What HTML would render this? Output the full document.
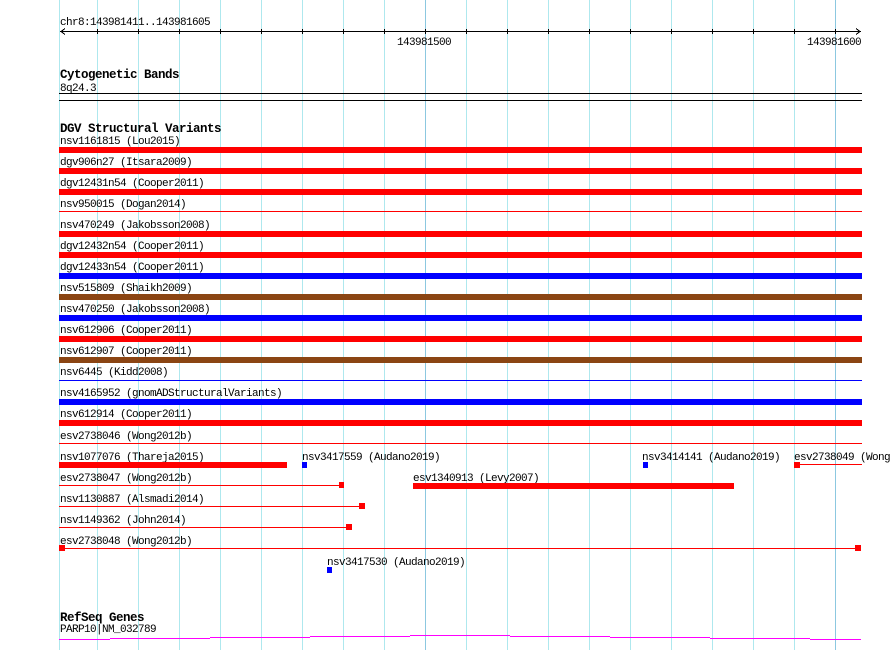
<!DOCTYPE html>
<html><head><meta charset="utf-8"><style>
html,body{margin:0;padding:0;background:#fff;width:890px;height:650px;overflow:hidden}
svg{display:block}
text{font-family:"Liberation Mono",monospace;font-size:11px;letter-spacing:-0.6px;fill:#000}
.b{font-weight:bold;font-size:12.5px;letter-spacing:-0.5px}
</style></head><body>
<svg width="890" height="650" viewBox="0 0 890 650" xmlns="http://www.w3.org/2000/svg" shape-rendering="crispEdges">
<g stroke="#aee8ee" stroke-width="1">
<line x1="59.5" y1="0" x2="59.5" y2="650"/>
<line x1="97.5" y1="0" x2="97.5" y2="650"/>
<line x1="138.5" y1="0" x2="138.5" y2="650"/>
<line x1="179.5" y1="0" x2="179.5" y2="650"/>
<line x1="220.5" y1="0" x2="220.5" y2="650"/>
<line x1="261.5" y1="0" x2="261.5" y2="650"/>
<line x1="302.5" y1="0" x2="302.5" y2="650"/>
<line x1="343.5" y1="0" x2="343.5" y2="650"/>
<line x1="384.5" y1="0" x2="384.5" y2="650"/>
<line x1="466.5" y1="0" x2="466.5" y2="650"/>
<line x1="507.5" y1="0" x2="507.5" y2="650"/>
<line x1="548.5" y1="0" x2="548.5" y2="650"/>
<line x1="589.5" y1="0" x2="589.5" y2="650"/>
<line x1="630.5" y1="0" x2="630.5" y2="650"/>
<line x1="671.5" y1="0" x2="671.5" y2="650"/>
<line x1="712.5" y1="0" x2="712.5" y2="650"/>
<line x1="753.5" y1="0" x2="753.5" y2="650"/>
<line x1="794.5" y1="0" x2="794.5" y2="650"/>
</g>
<g stroke="#8cc8e0"><line x1="425.5" y1="0" x2="425.5" y2="650"/><line x1="835.5" y1="0" x2="835.5" y2="650"/></g>

<text x="60" y="25">chr8:143981411..143981605</text>
<g stroke="#000" stroke-width="1" fill="none">
<line x1="60" y1="31.5" x2="861" y2="31.5"/>
<polyline points="65,28.5 61,31.5 65,34.5"/>
<polyline points="856,28.5 860,31.5 856,34.5"/>
<path d="M97.5 29v5M138.5 29v5M179.5 29v5M220.5 29v5M261.5 29v5M302.5 29v5M343.5 29v5M384.5 29v5M425.5 29v5M466.5 29v5M507.5 29v5M548.5 29v5M589.5 29v5M630.5 29v5M671.5 29v5M712.5 29v5M753.5 29v5M794.5 29v5M835.5 29v5"/>
</g>
<text x="397" y="45">143981500</text>
<text x="807" y="45">143981600</text>

<text class="b" x="60" y="78">Cytogenetic Bands</text>
<text x="60" y="91">8q24.3</text>
<rect x="59" y="93" width="803" height="1" fill="#000"/>
<rect x="59" y="100" width="803" height="1" fill="#000"/>

<text class="b" x="60" y="132">DGV Structural Variants</text>
<text x="60" y="144">nsv1161815 (Lou2015)</text>
<rect x="59" y="147" width="803" height="6" fill="#f00"/>
<text x="60" y="165">dgv906n27 (Itsara2009)</text>
<rect x="59" y="168" width="803" height="6" fill="#f00"/>
<text x="60" y="186">dgv12431n54 (Cooper2011)</text>
<rect x="59" y="189" width="803" height="6" fill="#f00"/>
<text x="60" y="207">nsv950015 (Dogan2014)</text>
<rect x="59" y="211" width="803" height="1" fill="#f00"/>
<text x="60" y="228">nsv470249 (Jakobsson2008)</text>
<rect x="59" y="231" width="803" height="6" fill="#f00"/>
<text x="60" y="249">dgv12432n54 (Cooper2011)</text>
<rect x="59" y="252" width="803" height="6" fill="#f00"/>
<text x="60" y="270">dgv12433n54 (Cooper2011)</text>
<rect x="59" y="273" width="803" height="6" fill="#00f"/>
<text x="60" y="291">nsv515809 (Shaikh2009)</text>
<rect x="59" y="294" width="803" height="6" fill="#8b4513"/>
<text x="60" y="312">nsv470250 (Jakobsson2008)</text>
<rect x="59" y="315" width="803" height="6" fill="#00f"/>
<text x="60" y="333">nsv612906 (Cooper2011)</text>
<rect x="59" y="336" width="803" height="6" fill="#f00"/>
<text x="60" y="354">nsv612907 (Cooper2011)</text>
<rect x="59" y="357" width="803" height="6" fill="#8b4513"/>
<text x="60" y="375">nsv6445 (Kidd2008)</text>
<rect x="59" y="380" width="803" height="1" fill="#00f"/>
<text x="60" y="396">nsv4165952 (gnomADStructuralVariants)</text>
<rect x="59" y="399" width="803" height="6" fill="#00f"/>
<text x="60" y="417">nsv612914 (Cooper2011)</text>
<rect x="59" y="420" width="803" height="6" fill="#f00"/>
<text x="60" y="439">esv2738046 (Wong2012b)</text>
<rect x="59" y="443" width="803" height="1" fill="#f00"/>

<text x="60" y="460">nsv1077076 (Thareja2015)</text>
<rect x="59" y="462" width="228" height="6" fill="#f00"/>
<text x="302" y="460">nsv3417559 (Audano2019)</text>
<rect x="302" y="462" width="5" height="6" fill="#00f"/>
<text x="642" y="460">nsv3414141 (Audano2019)</text>
<rect x="643" y="462" width="5" height="6" fill="#00f"/>
<text x="794" y="460">esv2738049 (Wong2012b)</text>
<rect x="794" y="464" width="68" height="1" fill="#f00"/>
<rect x="794" y="462" width="6" height="6" fill="#f00"/>

<text x="60" y="481">esv2738047 (Wong2012b)</text>
<rect x="59" y="485" width="282" height="1" fill="#f00"/>
<rect x="339" y="482" width="5" height="6" fill="#f00"/>
<text x="413" y="481">esv1340913 (Levy2007)</text>
<rect x="413" y="483" width="321" height="6" fill="#f00"/>

<text x="60" y="502">nsv1130887 (Alsmadi2014)</text>
<rect x="59" y="506" width="302" height="1" fill="#f00"/>
<rect x="359" y="503" width="6" height="6" fill="#f00"/>

<text x="60" y="523">nsv1149362 (John2014)</text>
<rect x="59" y="527" width="290" height="1" fill="#f00"/>
<rect x="346" y="524" width="6" height="6" fill="#f00"/>

<text x="60" y="544">esv2738048 (Wong2012b)</text>
<rect x="59" y="548" width="802" height="1" fill="#f00"/>
<rect x="59" y="545" width="6" height="6" fill="#f00"/>
<rect x="855" y="545" width="6" height="6" fill="#f00"/>

<text x="327" y="565">nsv3417530 (Audano2019)</text>
<rect x="327" y="567" width="5" height="6" fill="#00f"/>

<text class="b" x="60" y="621">RefSeq Genes</text>
<text x="60" y="632">PARP10|NM_032789</text>
<g fill="#f0f">
<rect x="59" y="639" width="51" height="1"/>
<rect x="110" y="638" width="100" height="1"/>
<rect x="210" y="637" width="100" height="1"/>
<rect x="310" y="636" width="100" height="1"/>
<rect x="410" y="635" width="100" height="1"/>
<rect x="510" y="636" width="100" height="1"/>
<rect x="610" y="637" width="100" height="1"/>
<rect x="710" y="638" width="100" height="1"/>
<rect x="810" y="639" width="51" height="1"/>
</g>
</svg>
</body></html>
